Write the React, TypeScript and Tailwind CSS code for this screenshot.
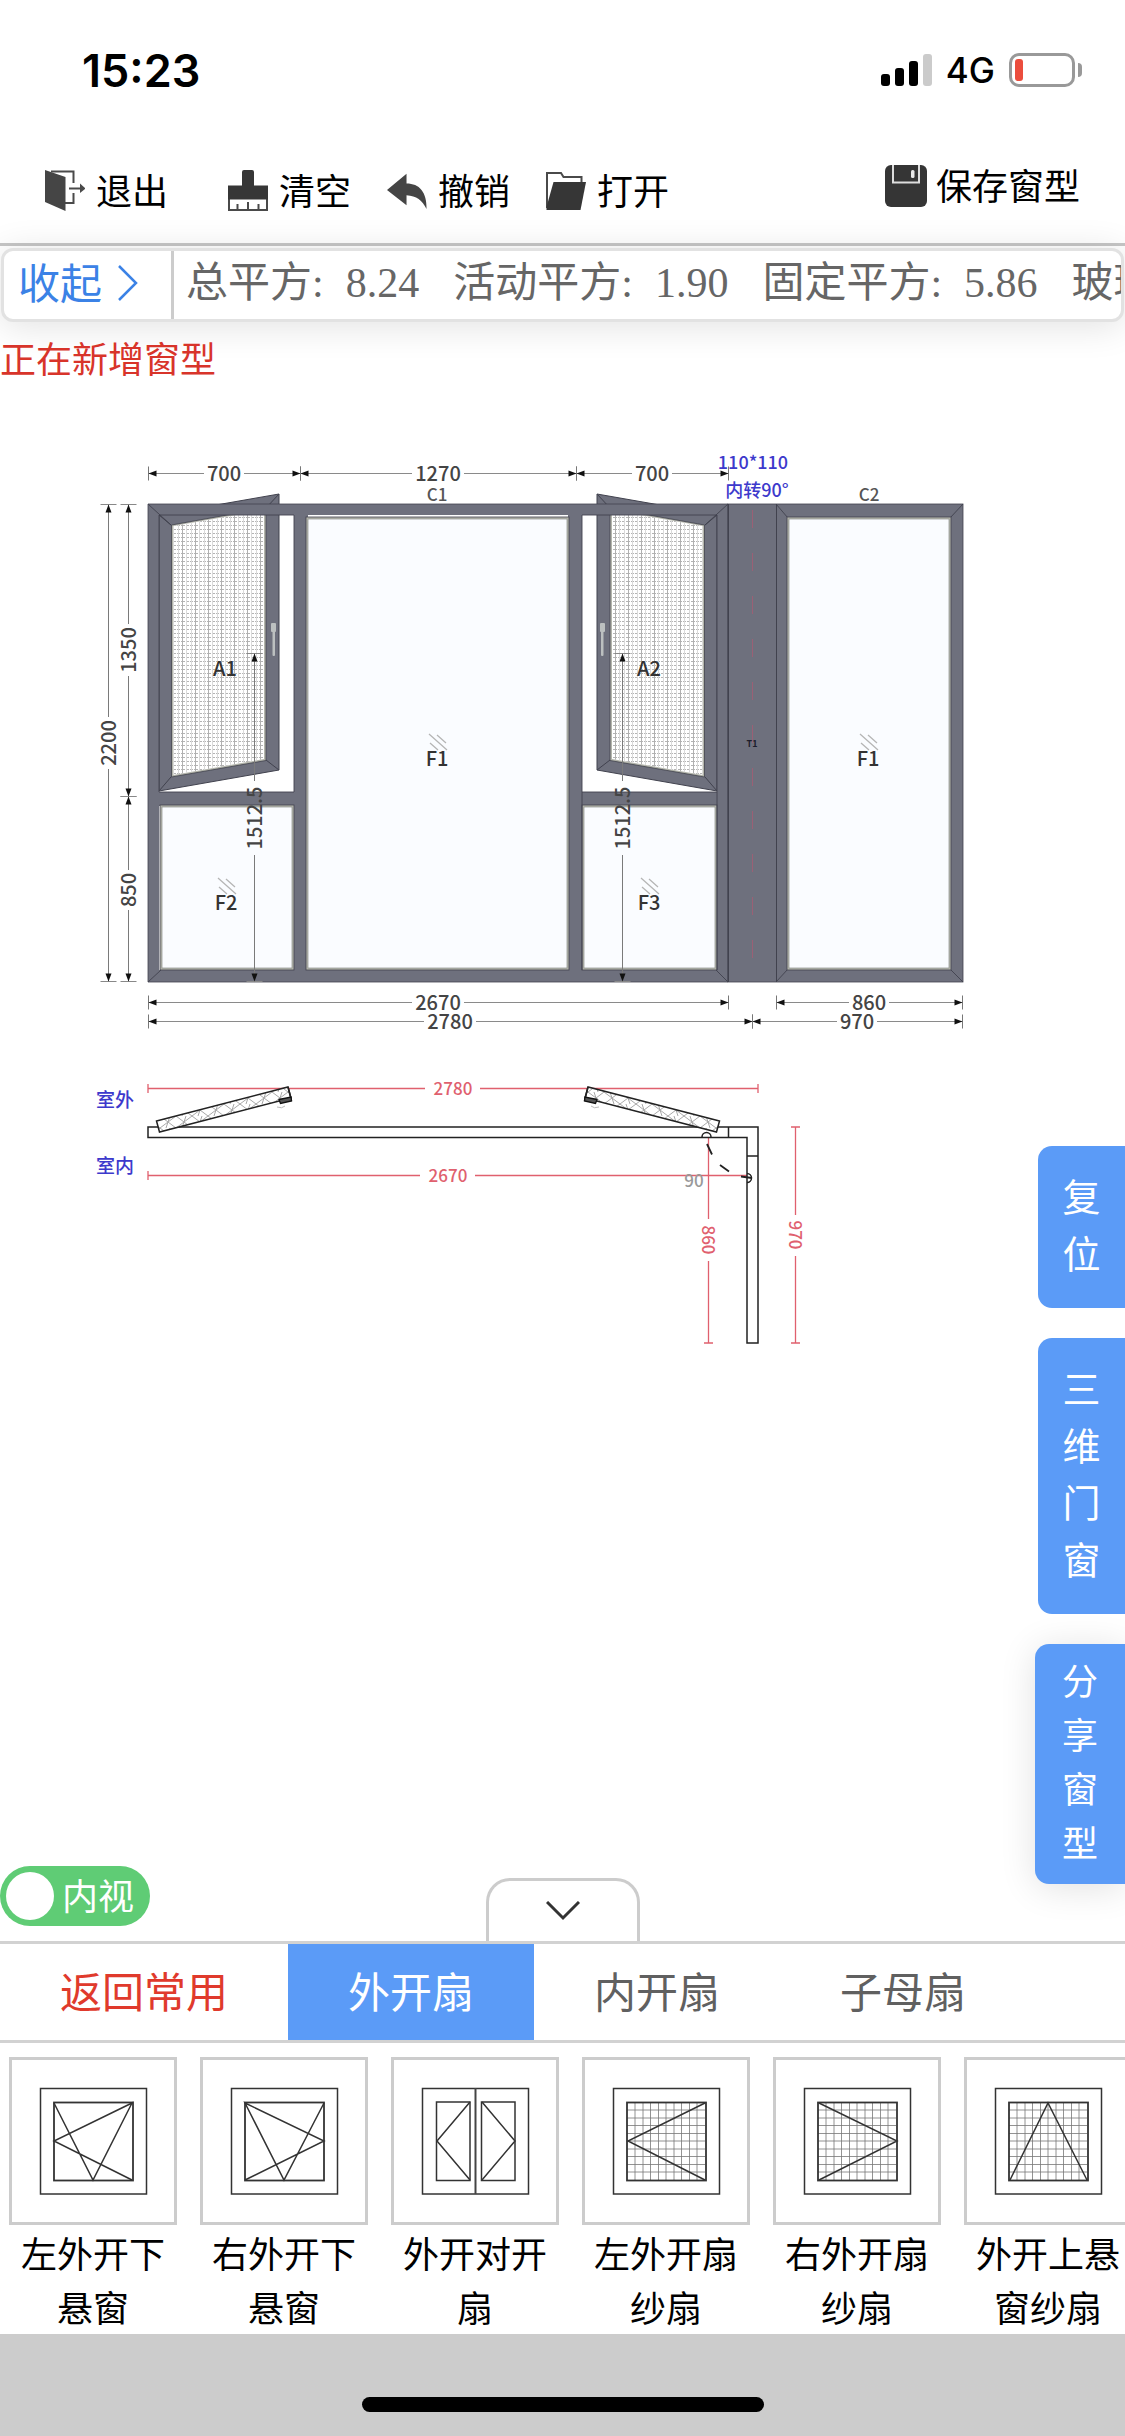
import React, { useState } from "react";

const FRAME = "#6e707d";
const EDGE = "#41424e";
const BEAD = "#b3b5ab";
const RED = "#e0606e";
const BLUE = "#3d39cc";

/* ---------- toolbar icons ---------- */

function ExitIcon() {
  return (
    <svg viewBox="0 0 40 42" className="h-[42px] w-10" aria-hidden="true">
      <path d="M6 1.5H28.5V13M28.5 23V33H20" fill="none" stroke="#4a4a4a" strokeWidth="2" />
      <path d="M0 0L20.500 7V41L0 32Z" fill="#454545" />
      <path d="M24 18.500H36" stroke="#4a4a4a" strokeWidth="2" />
      <path d="M35 13.500L40.500 18.500L35 23Z" fill="#4a4a4a" />
    </svg>
  );
}

function BrushIcon() {
  return (
    <svg viewBox="0 0 40 42" className="h-[42px] w-10" aria-hidden="true">
      <path d="M1 27V40H39V27Z" fill="#fff" stroke="#4a4a4a" strokeWidth="2" />
      <path d="M14 2Q14 0 16 0H24Q26 0 26 2V15.500H40V29.500H0V15.500H14Z" fill="#363636" />
      <path d="M9.500 34V39M20 32V39M30.500 34V39" stroke="#4a4a4a" strokeWidth="2" />
    </svg>
  );
}

function UndoIcon() {
  return (
    <svg viewBox="0 0 42 42" className="h-[42px] w-10" aria-hidden="true">
      <path d="M0 20L20.500 3V13C34 13 42 22 41.500 40C37 31 31 26 20.500 25.500V36Z" fill="#454545" />
    </svg>
  );
}

function FolderIcon() {
  return (
    <svg viewBox="0 0 40 42" className="h-[42px] w-10" aria-hidden="true">
      <path d="M1 38V3H15L17.500 7H35.500V12" fill="none" stroke="#4a4a4a" strokeWidth="2" />
      <path d="M7.500 12H40L34.500 40H0.500V37Z" fill="#363636" />
    </svg>
  );
}

function SaveIcon() {
  return (
    <svg viewBox="0 0 42 42" className="h-[42px] w-[42px]" aria-hidden="true">
      <rect width="42" height="42" rx="6" fill="#353535" />
      <path d="M8 0V17.500H34V0" fill="none" stroke="#ddd" strokeWidth="2" />
      <rect x="26" y="5" width="3.500" height="8" rx="1.500" fill="#e8e8e8" />
    </svg>
  );
}

const TOOLS = [
  { label: "退出", Icon: ExitIcon, gap: "mr-[60px]" },
  { label: "清空", Icon: BrushIcon, gap: "mr-9" },
  { label: "撤销", Icon: UndoIcon, gap: "mr-9" },
  { label: "打开", Icon: FolderIcon, gap: "" },
];

const TOTALS = [
  { label: "总平方", value: "8.24" },
  { label: "活动平方", value: "1.90" },
  { label: "固定平方", value: "5.86" },
  { label: "玻璃平方", value: "5.86" },
];

/* ---------- elevation drawing ---------- */

function HDim({ x1, x2, y, tx, label, gap }: { x1: number; x2: number; y: number; tx: number; label: string; gap: number }) {
  return (
    <g>
      <path d={`M${x1} ${y}H${tx - gap}M${tx + gap} ${y}H${x2}`} stroke="#8a8a8a" />
      <path d={`M${x1} ${y - 7}V${y + 7}M${x2} ${y - 7}V${y + 7}`} stroke="#777" />
      <path d={`M${x1} ${y}l8 -3v6zM${x2} ${y}l-8 -3v6z`} fill="#111" />
      <text x={tx} y={y + 7} textAnchor="middle" fontSize="20" fontWeight="500" fill="#444">{label}</text>
    </g>
  );
}

function VDim({ x, y1, y2, ty, label, gap }: { x: number; y1: number; y2: number; ty: number; label: string; gap: number }) {
  return (
    <g>
      <path d={`M${x} ${y1}V${ty - gap}M${x} ${ty + gap}V${y2}`} stroke="#7a7a7a" />
      <path d={`M${x - 8} ${y1}H${x + 8}M${x - 8} ${y2}H${x + 8}`} stroke="#888" />
      <path d={`M${x} ${y1}l-3 8h6zM${x} ${y2}l-3 -8h6z`} fill="#111" />
      <text transform={`translate(${x + 7} ${ty}) rotate(-90)`} textAnchor="middle" fontSize="20" fontWeight="500" fill="#444">{label}</text>
    </g>
  );
}

function Glass({ x, y, w, h }: { x: number; y: number; w: number; h: number }) {
  return (
    <g>
      <rect x={x - 2} y={y - 2} width={w + 4} height={h + 4} fill={BEAD} stroke={EDGE} strokeWidth="0.8" />
      <rect x={x} y={y} width={w} height={h} fill="#fafcff" stroke="#8b8d8a" strokeWidth="0.7" />
    </g>
  );
}

function PaneLabel({ x, y, label, glass }: { x: number; y: number; label: string; glass?: boolean }) {
  return (
    <g>
      {glass && (
        <path
          d={`M${x - 8} ${y - 25}l18 16M${x} ${y - 24}l9 8M${x - 7} ${y - 16}l8 7`}
          stroke="#b5b5b5"
          strokeWidth="1.300"
        />
      )}
      <text x={x} y={y + 7} textAnchor="middle" fontSize="20" fontWeight="500" fill="#333">{label}</text>
    </g>
  );
}

function Sash() {
  return (
    <g>
      <rect x="159" y="515" width="135" height="277" fill="#fff" />
      <path d="M159 515L279 494V770L159 791Z" fill={FRAME} stroke={EDGE} />
      <path d="M171.500 525L266 508V760.500L171.500 777Z" fill={BEAD} stroke={EDGE} strokeWidth="0.8" />
      <path d="M173.500 526L264 510V759L173.500 775Z" fill="#fff" />
      <path d="M173.500 526L264 510V759L173.500 775Z" fill="url(#mesh)" />
      <path d="M159 791L171 777M279 770L266 760M279 494L266 508M159 515L171 525" stroke={EDGE} />
    </g>
  );
}

function SashHandle() {
  return (
    <g fill="#bcc0c0">
      <rect x="271" y="623" width="5" height="9" rx="1" />
      <rect x="272.500" y="628" width="2.500" height="28" rx="1" />
    </g>
  );
}

function SashPlan() {
  return (
    <g>
      <path d="M156.500 1121L288 1087L291 1098L159.500 1132Z" fill="#fff" />
      <path d="M156.500 1121L288 1087L291 1098L159.500 1132Z" fill="url(#hatch)" stroke="#222" strokeWidth="1.500" />
      <path d="M288 1087L291.500 1101" stroke="#222" strokeWidth="1.500" />
      <path d="M279 1099.500L291 1097L291.500 1101L280.500 1103.500Z" fill="#555" stroke="#111" strokeWidth="1.300" />
      <path d="M277 1107q5 2 8 -1" stroke="#bbb" fill="none" />
    </g>
  );
}

function Drawing() {
  return (
    <svg
      viewBox="0 388 1125 992"
      className="block w-full font-['Noto_Sans_CJK_SC',sans-serif]"
      fill="none"
      role="img"
      aria-label="窗型图"
    >
      <defs>
        <pattern id="mesh" width="13" height="4" patternUnits="userSpaceOnUse">
          <path d="M0 1.500H13" stroke="#b4b4b4" strokeWidth="1" strokeDasharray="3 1" />
          <path d="M0.500 0V4" stroke="#b0b0b0" strokeWidth="1" />
          <path d="M4.500 0V4M9.500 0V4" stroke="#dadada" strokeWidth="1" />
        </pattern>
        <pattern id="hatch" width="16" height="12" patternUnits="userSpaceOnUse">
          <path d="M0 12L16 0M0 0L16 12M6 12L10 0" stroke="#a8a8a8" strokeWidth="1" />
        </pattern>
      </defs>

      {/* window unit C1 */}
      <Sash />
      <g transform="matrix(-1 0 0 1 876 0)"><Sash /></g>
      <g fill={FRAME}>
        <path d="M148 504H728V515H148Z" />
        <path d="M148 504H159V982H148ZM717 504H728V982H717Z" />
        <path d="M148 970H728V982H148Z" />
        <path d="M294 515H308V972H294ZM568 515H582V972H568Z" />
        <path d="M159 792H294V806H159ZM582 792H717V806H582Z" />
      </g>
      <Glass x={308} y={519} w={259} h={449} />
      <Glass x={162} y={807} w={130} h={161} />
      <Glass x={584} y={807} w={131} h={161} />
      <path d="M148 504H728V982H148Z" stroke={EDGE} strokeWidth="0.800" />
      <path
        d="M159 515H294M582 515H717M159 515V792M717 515V970M294 515V792M582 515V970M159 792H294M582 792H717M148 504L171 525M728 504L705 525M148 982L161 970M728 982L716 970"
        stroke={EDGE}
        strokeWidth="0.900"
      />
      <SashHandle />
      <g transform="matrix(-1 0 0 1 876 0)"><SashHandle /></g>

      {/* corner post and unit C2 */}
      <rect x="728" y="504" width="235" height="478" fill={FRAME} stroke={EDGE} strokeWidth="0.800" />
      <path d="M728.500 504V982M776.500 504V982" stroke={EDGE} />
      <path d="M776 504L788 518M963 504L950 518M776 982L788 969M963 982L950 969" stroke={EDGE} strokeWidth="0.900" />
      <Glass x={789} y={519} w={160} h={449} />
      <path d="M752.500 510V975" stroke="#9a6075" strokeDasharray="18 25" />
      <text x="752" y="747" textAnchor="middle" fontSize="9" fontWeight="700" fill="#1d1d2b">T1</text>

      {/* dimensions */}
      <HDim x1={148.5} x2={300.5} y={473.5} tx={224} label="700" gap={20} />
      <HDim x1={300.5} x2={576.5} y={473.5} tx={438} label="1270" gap={26} />
      <HDim x1={576.5} x2={728.5} y={473.5} tx={652} label="700" gap={20} />
      <HDim x1={148.5} x2={728.5} y={1002.5} tx={438} label="2670" gap={26} />
      <HDim x1={776.5} x2={962.5} y={1002.5} tx={869} label="860" gap={20} />
      <HDim x1={148.5} x2={752.5} y={1021.5} tx={450} label="2780" gap={26} />
      <HDim x1={752.5} x2={962.5} y={1021.5} tx={857} label="970" gap={20} />
      <VDim x={108.5} y1={504.5} y2={981.5} ty={743} label="2200" gap={26} />
      <VDim x={128.5} y1={504.5} y2={796.5} ty={650} label="1350" gap={26} />
      <VDim x={128.5} y1={796.5} y2={981.5} ty={890} label="850" gap={20} />
      <VDim x={254.5} y1={653.5} y2={981.5} ty={818} label="1512.5" gap={37} />
      <VDim x={622.5} y1={653.5} y2={981.5} ty={818} label="1512.5" gap={37} />

      <PaneLabel x={225} y={669} label="A1" />
      <PaneLabel x={649} y={669} label="A2" />
      <PaneLabel x={437} y={759} label="F1" glass />
      <PaneLabel x={226} y={903} label="F2" glass />
      <PaneLabel x={649} y={903} label="F3" glass />
      <PaneLabel x={868} y={759} label="F1" glass />

      <g textAnchor="middle" fontSize="18">
        <text x="437" y="501" fontSize="17" fontWeight="500" fill="#555">C1</text>
        <text x="869" y="501" fontSize="17" fontWeight="500" fill="#555">C2</text>
        <g fill={BLUE} fontWeight="500">
          <text x="753" y="469">110*110</text>
          <text x="757" y="497">内转90°</text>
          <text x="115" y="1107" fontSize="19">室外</text>
          <text x="115" y="1173" fontSize="19">室内</text>
        </g>
      </g>

      {/* plan view */}
      <g stroke={RED} strokeWidth="1.300">
        <path d="M148 1088.500H425M480 1088.500H758M148 1084V1093M758 1084V1093" />
        <path d="M148 1175.500H420M475 1175.500H747M148 1171V1180" />
        <path d="M708.500 1138V1219M708.500 1261V1343M704 1343H713" />
        <path d="M795.500 1127V1215M795.500 1256V1343M791 1127H800M791 1343H800" />
      </g>
      <g stroke="#222" strokeWidth="1.500">
        <path d="M747 1137.500H148V1127H758V1343H747ZM728.500 1127V1137.500M747 1156H758" />
        <path d="M702 1137a4.500 4.500 0 0 1 9 0M747 1173.500a4.500 4.500 0 0 1 0 9" />
        <path d="M707 1144L712 1154.500M720 1165L729 1171.500M741 1176.500L752 1178" strokeWidth="1.800" />
      </g>
      <SashPlan />
      <g transform="matrix(-1 0 0 1 876 0)"><SashPlan /></g>
      <g textAnchor="middle" fontSize="17" fontWeight="500">
        <text x="453" y="1095" fill={RED}>2780</text>
        <text x="448" y="1182" fill={RED}>2670</text>
        <text transform="translate(702 1240) rotate(90)" fill={RED}>860</text>
        <text transform="translate(789 1235) rotate(90)" fill={RED}>970</text>
        <text x="694" y="1187" fill="#999">90</text>
      </g>
    </svg>
  );
}

/* ---------- template thumbnails ---------- */

const GRID =
  "M53 45V123M61 45V123M68.500 45V123M76.500 45V123M84 45V123M92 45V123M99.500 45V123M107.500 45V123M115 45V123M45 53H123M45 61H123M45 68.500H123M45 76.500H123M45 84H123M45 92H123M45 99.500H123M45 107.500H123M45 115H123";

function Thumb({ lines, grid, split }: { lines: string; grid?: boolean; split?: boolean }) {
  return (
    <svg viewBox="0 0 168 168" className="h-full w-full" fill="none" stroke="#333" strokeWidth="1.500" aria-hidden="true">
      <rect x="31.500" y="31.500" width="106" height="105.500" />
      {grid && <path d={GRID} stroke="#777" strokeWidth="0.800" />}
      {split ? (
        <>
          <path d="M84.500 31V137" stroke="#444" strokeWidth="2" />
          <path d="M45.500 45H79V123.500H45.500ZM90.500 45H124V123.500H90.500Z" />
        </>
      ) : (
        <rect x="45" y="45.500" width="79" height="78" strokeWidth="1.800" />
      )}
      <path d={lines} />
    </svg>
  );
}

const TEMPLATES = [
  { name: "左外开下悬窗", lines: "M45 46L84 123L123 46L45 84L123 123" },
  { name: "右外开下悬窗", lines: "M124 46L84 123L45 46L124 84L45 123" },
  { name: "外开对开扇", lines: "M79 45L46 84L79 123M91 45L124 84L91 123", split: true },
  { name: "左外开扇纱扇", lines: "M123 46L46 84L123 123", grid: true },
  { name: "右外开扇纱扇", lines: "M46 46L124 84L46 123", grid: true },
  { name: "外开上悬窗纱扇", lines: "M46 123L84 46L123 123", grid: true },
];

const TABS = ["返回常用", "外开扇", "内开扇", "子母扇"];

export default function App() {
  const [tab, setTab] = useState("外开扇");
  const [inside, setInside] = useState(true);
  return (
    <div className="flex min-h-screen flex-col overflow-hidden bg-white font-['Noto_Sans_CJK_SC',sans-serif] text-4xl text-black">
      {/* status bar */}
      <header className="flex h-[132px] shrink-0 items-center justify-between pt-2 pr-[43px] pl-[82px] font-['Inter',sans-serif]">
        <time className="text-[45px] leading-none font-semibold">15:23</time>
        <div className="flex items-center">
          <div className="flex h-8 items-end gap-[5px]" aria-hidden="true">
            <span className="h-3 w-[9px] rounded-[3px] bg-black" />
            <span className="h-[18px] w-[9px] rounded-[3px] bg-black" />
            <span className="h-[25px] w-[9px] rounded-[3px] bg-black" />
            <span className="h-8 w-[9px] rounded-[3px] bg-[#cbcbcb]" />
          </div>
          <span className="ml-3.5 text-[35px] leading-none font-medium">4G</span>
          <div className="ml-3.5 flex h-[34px] w-[66px] items-center rounded-[10px] border-[3px] border-[#999] pl-[3px]">
            <span className="h-[22px] w-2 rounded-[3px] bg-[#eb4d3d]" />
          </div>
          <span className="ml-[3px] h-3.5 w-1 rounded-r-full bg-[#999]" />
        </div>
      </header>

      {/* toolbar */}
      <nav className="flex h-[114px] shrink-0 items-center justify-between border-b-[3px] border-[#c6c6c6] px-[45px]">
        <div className="flex items-center pt-1.5">
          {TOOLS.map(({ label, Icon, gap }) => (
            <button key={label} type="button" className={`flex items-center gap-[11px] leading-none ${gap}`}>
              <Icon />
              <span className="pb-1">{label}</span>
            </button>
          ))}
        </div>
        <button type="button" className="flex items-center gap-[9px] pb-1 leading-none">
          <SaveIcon />
          <span className="pb-1">保存窗型</span>
        </button>
      </nav>

      {/* totals */}
      <section className="relative mx-px mt-0.5 flex h-[74px] shrink-0 rounded-xl border-[3px] border-[#e2e2e2] bg-white text-[42px] leading-none shadow-[0_4px_36px_rgba(0,0,0,0.12)]">
        <button type="button" className="flex w-[170px] shrink-0 items-center gap-4 border-r-[3px] border-[#ccc] pb-1 pl-3.5 text-[#3b82e6]">
          <span className="pb-1">收起</span>
          <svg viewBox="0 0 20 36" className="h-9 w-5" fill="none" stroke="currentColor" strokeWidth="2.500" aria-hidden="true">
            <path d="M1 1L18 18L1 35" />
          </svg>
        </button>
        <dl className="flex min-w-0 flex-1 items-center gap-[34px] overflow-hidden pb-1 pl-3 whitespace-nowrap text-[#666] font-['Liberation_Serif','Noto_Sans_CJK_SC',serif]">
          {TOTALS.map((t) => (
            <div key={t.label} className="flex shrink-0 gap-[22px]">
              <dt>{t.label}:</dt>
              <dd>{t.value}</dd>
            </div>
          ))}
        </dl>
      </section>

      {/* canvas */}
      <main className="relative flex-1 pt-2">
        <p className="pb-1 leading-[54px] text-[#d8342a]">正在新增窗型</p>
        <Drawing />

        <div className="absolute right-0 bottom-[57px] flex flex-col items-end gap-[30px] text-white">
          <button type="button" className="w-[87px] rounded-l-[14px] bg-[#5b9bf7] px-6 pt-5 pb-7 text-[38px] leading-[57px] break-all">复位</button>
          <button type="button" className="w-[87px] rounded-l-[14px] bg-[#5b9bf7] px-6 pt-5 pb-7 text-[38px] leading-[57px] break-all">三维门窗</button>
          <button type="button" className="w-[90px] rounded-l-[14px] bg-[#5b9bf7] px-6 pt-2 pb-4 leading-[54px] break-all shadow-[0_4px_36px_rgba(0,0,0,0.12)]">分享窗型</button>
        </div>

        <label className="absolute bottom-[15px] left-0 flex h-[60px] w-[150px] items-center rounded-full bg-[#5fcc75] pl-1.5 leading-none text-white">
          <input
            type="checkbox"
            role="switch"
            className="sr-only"
            checked={inside}
            onChange={(e) => setInside(e.target.checked)}
          />
          <span className="mr-2 h-12 w-12 rounded-full bg-white" />
          <span className="pb-1">内视</span>
        </label>

        <button
          type="button"
          aria-label="收起面板"
          className="absolute bottom-0 left-1/2 flex h-[63px] w-[154px] -translate-x-1/2 items-center justify-center rounded-t-3xl border-[3px] border-b-0 border-[#ccc] bg-white"
        >
          <svg viewBox="0 0 34 20" className="h-5 w-[34px]" fill="none" stroke="#333" strokeWidth="3" aria-hidden="true">
            <path d="M1 1L17 17L33 1" />
          </svg>
        </button>
      </main>

      {/* category tabs */}
      <div role="tablist" className="flex h-[102px] shrink-0 border-y-[3px] border-[#d2d2d2] text-[42px] leading-none">
        {TABS.map((t, i) => (
          <button
            key={t}
            type="button"
            role="tab"
            aria-selected={t === tab}
            onClick={() => i > 0 && setTab(t)}
            className={`px-[60px] pb-1 ${t === tab ? "bg-[#5b9bf7] text-white" : i === 0 ? "text-[#e03a2c]" : "text-[#606060]"}`}
          >
            {t}
          </button>
        ))}
      </div>

      {/* templates */}
      <ul className="flex shrink-0 gap-[23px] overflow-hidden pt-3.5 pb-px pl-[9px]">
        {TEMPLATES.map((t) => (
          <li key={t.name} className="w-[168px] shrink-0">
            <button type="button" className="block w-full leading-[54px]">
              <span className="block h-[168px] w-full border-[3px] border-[#ccc]">
                <span className="-m-[3px] block h-[168px]">
                  <Thumb lines={t.lines} grid={t.grid} split={t.split} />
                </span>
              </span>
              <span className="block h-[108px] px-3">{t.name}</span>
            </button>
          </li>
        ))}
      </ul>

      <footer className="flex h-[102px] shrink-0 items-end justify-center bg-[#ccc] pb-6">
        <div className="h-[15px] w-[402px] rounded-full bg-black" />
      </footer>
    </div>
  );
}
